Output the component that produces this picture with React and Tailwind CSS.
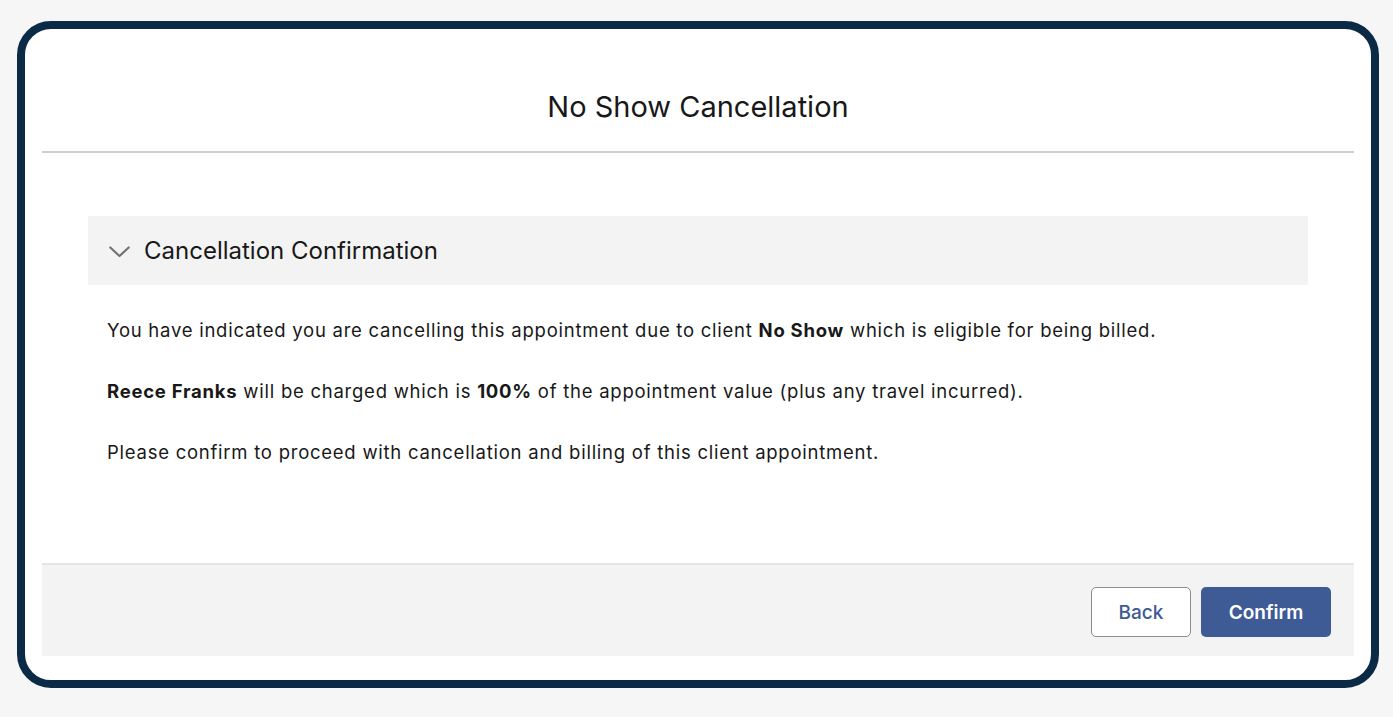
import React from "react";

export default function App() {
  return (
    <div
      className="w-[1393px] h-[717px] bg-[#f6f6f6] pl-[17px] pt-[21px]"
      style={{ fontFamily: "Inter, 'Noto Sans', sans-serif" }}
    >
      <div className="w-[1362px] h-[667px] border-[8px] border-[#0b2a45] rounded-[34px] bg-white px-[17px] flex flex-col">
        <div className="flex-1 flex flex-col">
          {/* Header */}
          <div className="h-[124px] border-b-2 border-[#cfcfcf] flex justify-center pt-[61px]">
            <h1 className="text-[29px] leading-[34px] text-[#181818] font-normal">No Show Cancellation</h1>
          </div>
          {/* Body */}
          <div className="flex-1 px-[46px] pt-[63px]">
            <div className="h-[69px] bg-[#f3f3f3] flex items-center pl-[21px]">
              <svg width="21" height="12" viewBox="0 0 21 12" className="mr-[14px] mt-[3px]">
                <path d="M1.3 1.5 L10.5 10 L19.7 1.5" fill="none" stroke="#737373" strokeWidth="2.2" strokeLinecap="round" strokeLinejoin="round" />
              </svg>
              <span className="text-[24px] leading-[30px] text-[#181818]">Cancellation Confirmation</span>
            </div>
            <div className="pl-[19px] pt-[33px] text-[18.5px] leading-[24px] tracking-[0.75px] text-[#181818] flex flex-col gap-[37px]">
              <p>
                You have indicated you are cancelling this appointment due to client <b className="font-bold">No Show</b> which is eligible for being billed.
              </p>
              <p>
                <b className="font-bold">Reece Franks</b> will be charged which is <b className="font-bold">100%</b> of the appointment value (plus any travel incurred).
              </p>
              <p>Please confirm to proceed with cancellation and billing of this client appointment.</p>
            </div>
          </div>
          {/* Footer */}
          <div className="h-[93px] bg-[#f3f3f3] border-t-2 border-[#e5e5e5] flex justify-end items-start pt-[22px] pr-[23px] gap-[10px]">
            <button className="w-[100px] h-[50px] rounded-[5px] border border-[#8c8c8c] bg-white text-[#3d5a93] text-[19px] font-medium pt-[3px]">
              Back
            </button>
            <button className="w-[130px] h-[50px] rounded-[5px] bg-[#3f5b95] text-white text-[19px] font-semibold pt-[3px]">
              Confirm
            </button>
          </div>
        </div>
        <div className="h-[24px]" />
      </div>
    </div>
  );
}
